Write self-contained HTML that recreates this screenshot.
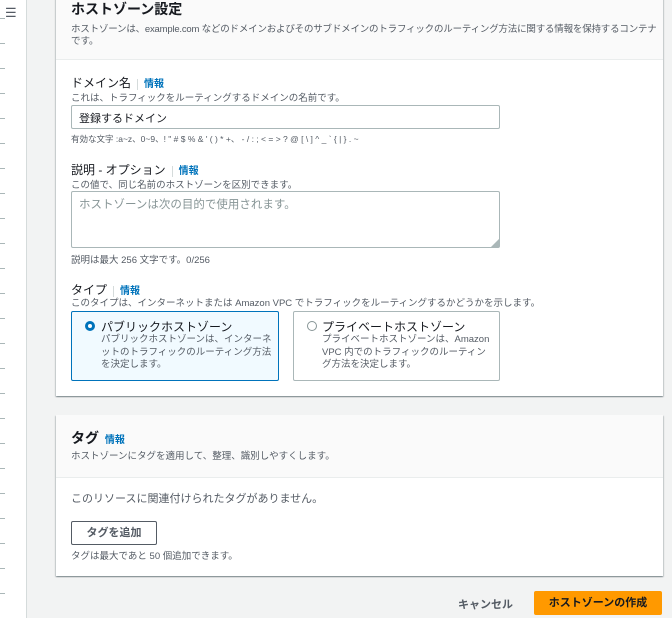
<!DOCTYPE html>
<html><head><meta charset="utf-8"><style>
*{box-sizing:border-box;margin:0;padding:0}
body{width:672px;height:618px;overflow:hidden;background:#f2f3f3;font-family:"Liberation Sans","Noto Sans CJK JP",sans-serif;color:#16191f;position:relative}
.abs{position:absolute;white-space:nowrap}
.side{position:absolute;left:0;top:0;width:27px;height:618px;background:#fff;border-right:1px solid #d5dbdb}
.tick{position:absolute;left:0;width:5px;height:1px;background:#aab7b8}
.panel{position:absolute;left:56px;width:607px;background:#fff;box-shadow:0 1px 1px rgba(0,28,36,.3),1px 1px 1px rgba(0,28,36,.15),-1px 1px 1px rgba(0,28,36,.15)}
.hd{background:#fafafa;border-bottom:1px solid #eaeded}
.lbl{font-size:12px;color:#16191f}
.info{font-size:10px;color:#0073bb;font-weight:bold;border-left:1px solid #d5dbdb;padding-left:6px;margin-left:6px}
.desc{font-size:9.5px;color:#545b64}
.inp{position:absolute;border:1px solid #aab7b8;border-radius:2px;background:#fff;font-size:12px;padding:4px 7px}
.radio{position:absolute;width:10px;height:10px;border-radius:50%}
</style></head><body>
<div class="side">
<div class="abs" style="left:5px;top:5px;font-size:13px;color:#545b64">☰</div>
</div>
<div class="tick" style="top:18px"></div><div class="tick" style="top:43px"></div><div class="tick" style="top:68px"></div><div class="tick" style="top:93px"></div><div class="tick" style="top:118px"></div><div class="tick" style="top:143px"></div><div class="tick" style="top:168px"></div><div class="tick" style="top:193px"></div><div class="tick" style="top:218px"></div><div class="tick" style="top:243px"></div><div class="tick" style="top:268px"></div><div class="tick" style="top:293px"></div><div class="tick" style="top:318px"></div><div class="tick" style="top:343px"></div><div class="tick" style="top:368px"></div><div class="tick" style="top:393px"></div><div class="tick" style="top:418px"></div><div class="tick" style="top:443px"></div><div class="tick" style="top:468px"></div><div class="tick" style="top:493px"></div><div class="tick" style="top:518px"></div><div class="tick" style="top:543px"></div><div class="tick" style="top:568px"></div><div class="tick" style="top:593px"></div>

<div class="panel" style="top:-4px;height:400px">
<div class="hd" style="height:64px"></div>
</div>
<div class="abs" style="left:71px;top:-1px;font-size:14px;font-weight:bold">ホストゾーン設定</div>
<div class="abs desc" style="left:71px;top:21px;letter-spacing:-0.2px">ホストゾーンは、example.com などのドメインおよびそのサブドメインのトラフィックのルーティング方法に関する情報を保持するコンテナ</div>
<div class="abs desc" style="left:71px;top:33px">です。</div>

<div class="abs lbl" style="left:71px;top:74px">ドメイン名<span class="info">情報</span></div>
<div class="abs desc" style="left:71px;top:90px">これは、トラフィックをルーティングするドメインの名前です。</div>
<div class="inp" style="left:71px;top:105px;width:429px;height:24px;font-size:11px">登録するドメイン</div>
<div class="abs" style="left:71px;top:133px;font-size:8.5px;color:#545b64">有効な文字 :a~z、0~9、! " # $ % &amp; ' ( ) * +、 - / : ; &lt; = &gt; ? @ [ \ ] ^ _ ` { | } . ~</div>

<div class="abs lbl" style="left:71px;top:161px">説明 - オプション<span class="info">情報</span></div>
<div class="abs desc" style="left:71px;top:177px">この値で、同じ名前のホストゾーンを区別できます。</div>
<div class="inp" style="left:71px;top:191px;width:429px;height:57px;color:#879596;font-size:11.5px">ホストゾーンは次の目的で使用されます。</div>
<div class="abs" style="left:491px;top:238px;font-size:8px;color:#aab7b8">◢</div>
<div class="abs desc" style="left:71px;top:252px">説明は最大 256 文字です。0/256</div>

<div class="abs lbl" style="left:71px;top:281px">タイプ<span class="info">情報</span></div>
<div class="abs desc" style="left:71px;top:295px">このタイプは、インターネットまたは Amazon VPC でトラフィックをルーティングするかどうかを示します。</div>

<div class="abs" style="left:71px;top:311px;width:208px;height:70px;border:1px solid #0073bb;background:#f1faff;border-radius:2px"></div>
<div class="radio" style="left:85px;top:321px;border:3px solid #0073bb;background:#fff"></div>
<div class="abs lbl" style="left:101px;top:318px">パブリックホストゾーン</div>
<div class="abs desc" style="left:101px;top:334px;line-height:12.5px">パブリックホストゾーンは、インターネ<br>ットのトラフィックのルーティング方法<br>を決定します。</div>

<div class="abs" style="left:293px;top:311px;width:207px;height:70px;border:1px solid #aab7b8;background:#fff;border-radius:2px"></div>
<div class="radio" style="left:307px;top:321px;border:1px solid #879596"></div>
<div class="abs lbl" style="left:322px;top:318px">プライベートホストゾーン</div>
<div class="abs desc" style="left:322px;top:334px;line-height:12.5px">プライベートホストゾーンは、Amazon<br>VPC 内でのトラフィックのルーティン<br>グ方法を決定します。</div>

<div class="panel" style="top:415px;height:161px">
<div class="hd" style="height:63px"></div>
</div>
<div class="abs" style="left:71px;top:428px;font-size:14px;font-weight:bold">タグ <span style="font-size:10px;color:#0073bb;margin-left:2px">情報</span></div>
<div class="abs desc" style="left:71px;top:448px">ホストゾーンにタグを適用して、整理、識別しやすくします。</div>
<div class="abs" style="left:71px;top:490px;font-size:11px;color:#545b64">このリソースに関連付けられたタグがありません。</div>
<div class="abs" style="left:71px;top:521px;width:86px;height:24px;border:1px solid #545b64;border-radius:2px;background:#fff;font-size:11px;font-weight:bold;color:#545b64;text-align:center;line-height:22px">タグを追加</div>
<div class="abs desc" style="left:71px;top:548px">タグは最大であと 50 個追加できます。</div>

<div class="abs" style="left:458px;top:596px;font-size:11px;font-weight:bold;color:#545b64">キャンセル</div>
<div class="abs" style="left:534px;top:591px;width:128px;height:24px;background:#ff9900;border-radius:2px;font-size:11px;font-weight:bold;color:#16191f;text-align:center;line-height:24px">ホストゾーンの作成</div>
</body></html>
